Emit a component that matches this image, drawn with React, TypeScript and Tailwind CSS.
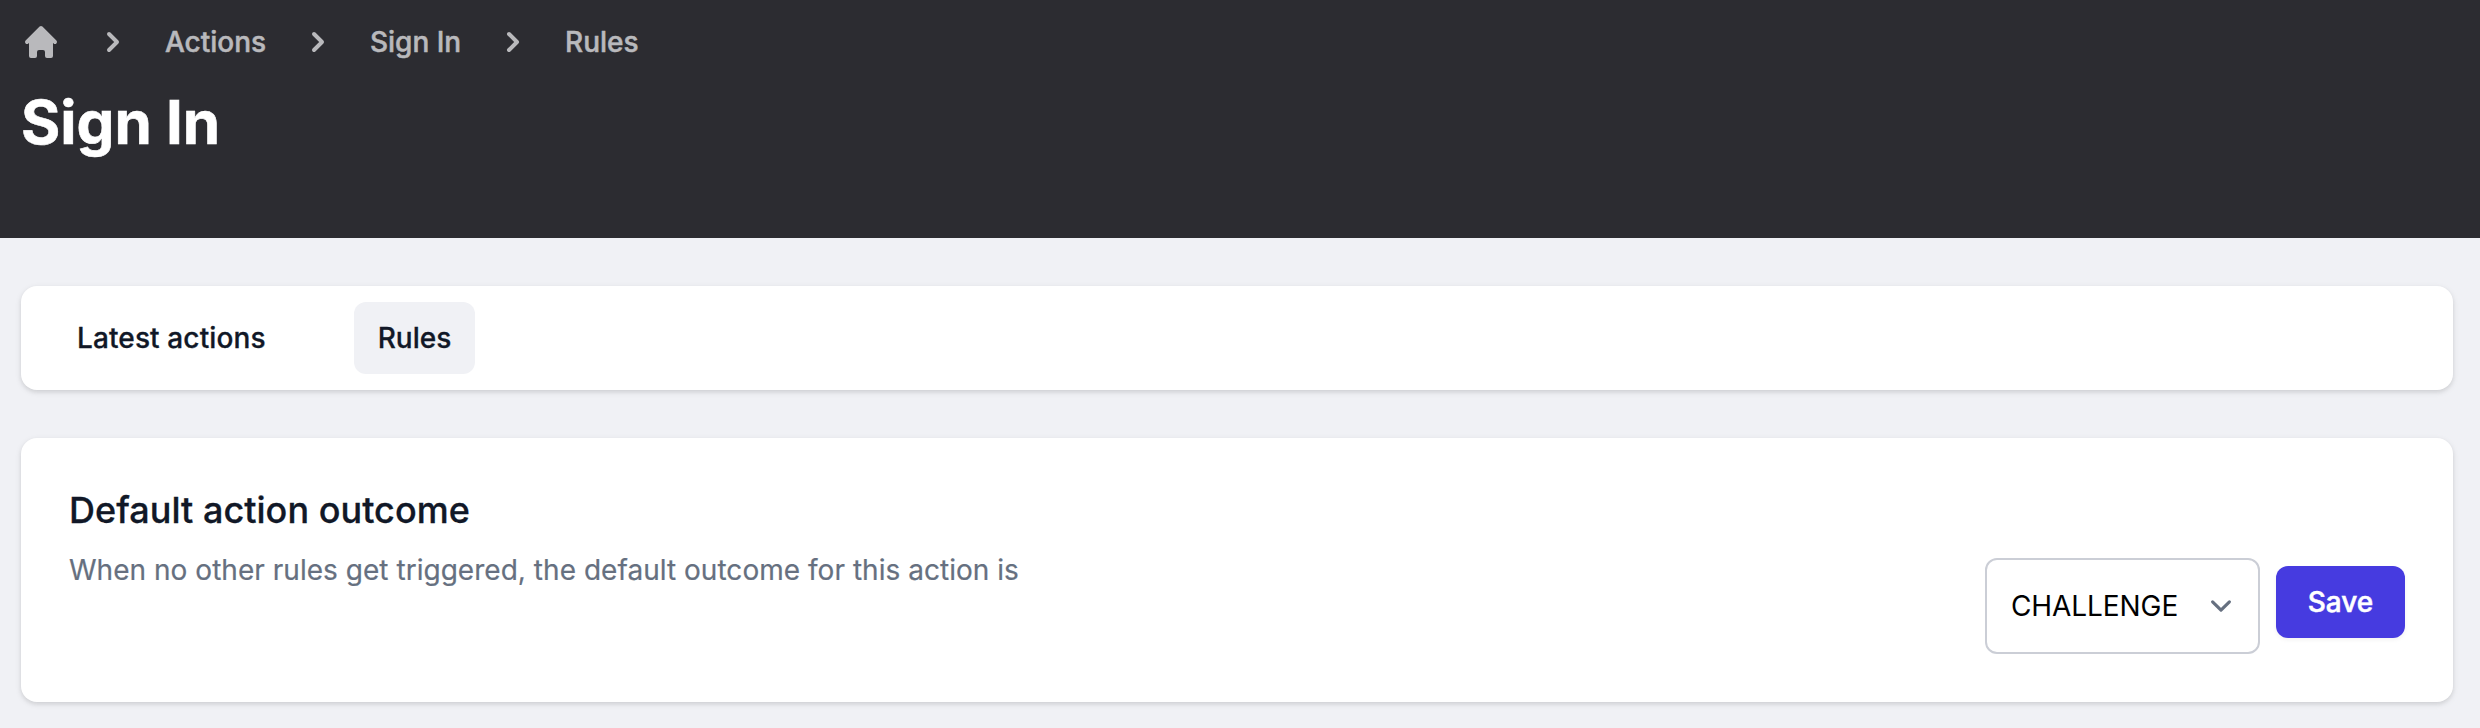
import { Fragment } from "react";

const crumbs = ["Actions", "Sign In", "Rules"];

function HomeIcon() {
  return (
    <svg className="size-10 shrink-0" viewBox="0 0 20 20" fill="currentColor" aria-hidden="true">
      <path d="M10.707 2.293a1 1 0 00-1.414 0l-7 7a1 1 0 001.414 1.414L4 10.414V17a1 1 0 001 1h2a1 1 0 001-1v-2a1 1 0 011-1h2a1 1 0 011 1v2a1 1 0 001 1h2a1 1 0 001-1v-6.586l.293.293a1 1 0 001.414-1.414l-7-7z" />
    </svg>
  );
}

function ChevronRight() {
  return (
    <svg className="size-10 shrink-0" viewBox="0 0 20 20" fill="currentColor" aria-hidden="true">
      <path
        fillRule="evenodd"
        clipRule="evenodd"
        d="M7.293 14.707a1 1 0 010-1.414L10.586 10 7.293 6.707a1 1 0 011.414-1.414l4 4a1 1 0 010 1.414l-4 4a1 1 0 01-1.414 0z"
      />
    </svg>
  );
}

function ChevronDown() {
  return (
    <svg className="size-[42px] shrink-0 text-[#667080]" viewBox="0 0 20 20" fill="none" stroke="currentColor" aria-hidden="true">
      <path d="M6 8l4 4 4-4" strokeWidth="1.5" strokeLinecap="round" strokeLinejoin="round" />
    </svg>
  );
}

const card = "rounded-2xl bg-white shadow-[0_2px_6px_rgba(0,0,0,0.1),0_2px_4px_rgba(0,0,0,0.06)]";

export default function App() {
  return (
    <div className="h-[728px] overflow-hidden bg-[#f0f1f5] font-['Inter',sans-serif] text-[28px] leading-10 text-[#111827]">
      <header className="h-[238px] bg-[#2c2c31] px-[21px] pt-[22px]">
        <nav className="flex items-center gap-8 font-medium tracking-[-0.03px] text-[#b9b9bc]">
          <HomeIcon />
          {crumbs.map((crumb) => (
            <Fragment key={crumb}>
              <ChevronRight />
              <a className="[-webkit-text-stroke:0.5px_currentColor]">{crumb}</a>
            </Fragment>
          ))}
        </nav>
        <h1 className="mt-6 text-[60px] leading-[72px] font-bold text-white [-webkit-text-stroke:0.6px_currentColor]">Sign In</h1>
      </header>
      <main className="flex flex-col gap-12 pt-12 pr-[27px] pl-[21px]">
        <nav className={`${card} flex gap-16 px-8 py-4 font-medium`}>
          <a className="rounded-xl px-6 py-4 tracking-[0.12px] [-webkit-text-stroke:0.3px_currentColor]">Latest actions</a>
          <a className="rounded-xl bg-[#f0f1f5] px-6 py-4 [-webkit-text-stroke:0.3px_currentColor]">Rules</a>
        </nav>
        <section className={`${card} flex h-[264px] justify-between p-12`}>
          <div>
            <h2 className="text-4xl leading-[48px] font-medium tracking-[0.03px] [-webkit-text-stroke:0.3px_currentColor]">Default action outcome</h2>
            <p className="mt-4 tracking-[0.03px] text-[#667080] [-webkit-text-stroke:0.2px_currentColor]">
              When no other rules get triggered, the default outcome for this action is
            </p>
          </div>
          <div className="flex items-end gap-4">
            <button className="flex h-24 w-[275px] items-center justify-between rounded-xl border-2 border-[#cbced6] pr-4 pl-6 text-black">
              <span className="tracking-[-0.08px]">CHALLENGE</span>
              <ChevronDown />
            </button>
            <button className="mb-4 h-[72px] w-[129px] rounded-xl bg-[#463be0] font-medium text-white shadow-[0_2px_4px_rgba(0,0,0,0.05)] [-webkit-text-stroke:0.5px_currentColor]">
              Save
            </button>
          </div>
        </section>
      </main>
    </div>
  );
}
